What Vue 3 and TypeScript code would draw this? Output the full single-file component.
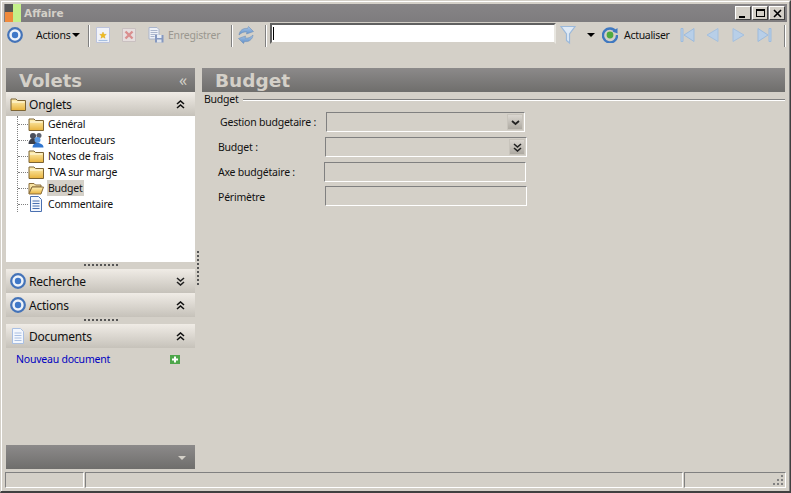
<script setup lang="ts">
const tree = [
  { label: 'Général', icon: 'i-folder', sel: false },
  { label: 'Interlocuteurs', icon: 'i-people', sel: false },
  { label: 'Notes de frais', icon: 'i-folder', sel: false },
  { label: 'TVA sur marge', icon: 'i-folder', sel: false },
  { label: 'Budget', icon: 'i-open', sel: true },
  { label: 'Commentaire', icon: 'i-doc', sel: false },
]
const rows = [
  { label: 'Gestion budgetaire :', cls: 'r1', arrow: 'i-down1' },
  { label: 'Budget :', cls: 'r2', arrow: 'i-down2' },
  { label: 'Axe budgétaire :', cls: 'r3', arrow: '' },
  { label: 'Périmètre', cls: 'r4', arrow: '' },
]
</script>

<template>
  <div class="root">
    <svg class="defs" width="0" height="0">
      <defs>
        <linearGradient id="fold" x1="0" y1="0" x2="0" y2="1">
          <stop offset="0" stop-color="#fff2b8" />
          <stop offset="1" stop-color="#e8b23c" />
        </linearGradient>
        <linearGradient id="blue" x1="0" y1="0" x2="0" y2="1">
          <stop offset="0" stop-color="#a9c6e8" />
          <stop offset="1" stop-color="#5f8fc8" />
        </linearGradient>
        <symbol id="i-target" viewBox="0 0 16 16">
          <circle cx="8" cy="8" r="6.800" fill="#eef3fa" stroke="#4473b8" stroke-width="2.200" />
          <circle cx="8" cy="8" r="3.200" fill="#3f78c8" />
        </symbol>
        <symbol id="i-folder" viewBox="0 0 16 16">
          <path d="M1 3h5l1.500 1.500H15.500V14.500H1z" fill="url(#fold)" stroke="#7d6434" />
          <path d="M2 6h12.500" stroke="#fffbe6" />
        </symbol>
        <symbol id="i-open" viewBox="0 0 16 16">
          <path d="M1 3.500h5L7.500 5H13v2H4L1 13.500z" fill="#f7e3a4" stroke="#8a6d3a" />
          <path d="M4 7h11.500L13 14H1z" fill="url(#fold)" stroke="#8a6d3a" />
        </symbol>
        <symbol id="i-people" viewBox="0 0 16 16">
          <circle cx="5" cy="4" r="3" fill="#4a4f5c" />
          <circle cx="11" cy="3.500" r="2.500" fill="#5c6270" />
          <path d="M.500 12c0-3.500 2-5.500 4.500-5.500S9.500 8.500 9.500 12z" fill="#3b3f4a" />
          <circle cx="9.500" cy="8" r="3" fill="#5b9ae4" />
          <path d="M4.500 15.500c0-3 2-4.500 5-4.500s6 1.500 6 4.500z" fill="#2f75cf" />
        </symbol>
        <symbol id="i-doc" viewBox="0 0 16 16">
          <path d="M2.500 .5h8l3 3v12h-11z" fill="#f3f7fd" stroke="#4a70b0" />
          <path d="M4.500 5h7M4.500 7.500h7M4.500 10h7M4.500 12.500h7" stroke="#4a70b0" />
        </symbol>
        <symbol id="i-doc-light" viewBox="0 0 16 16">
          <path d="M2.500 .5h8l3 3v12h-11z" fill="#f3f7fd" stroke="#a9bfe2" />
          <path d="M4.500 5h7M4.500 7.500h7M4.500 10h7M4.500 12.500h7" stroke="#a9bfe2" />
        </symbol>
        <symbol id="i-up2" viewBox="0 0 9 9">
          <path d="M1 4l3.500-3L8 4M1 8l3.500-3L8 8" fill="none" stroke="#111" stroke-width="1.600" />
        </symbol>
        <symbol id="i-down2" viewBox="0 0 9 9">
          <path d="M1 1l3.500 3L8 1M1 5l3.500 3L8 5" fill="none" stroke="#222" stroke-width="1.600" />
        </symbol>
        <symbol id="i-down1" viewBox="0 0 9 9">
          <path d="M1 3l3.500 3L8 3" fill="none" stroke="#222" stroke-width="1.800" />
        </symbol>
      </defs>
    </svg>

    <div class="win">
      <header class="title">
        <svg class="logo" width="16" height="18" viewBox="0 0 16 18">
          <rect x="0" y="0" width="8" height="8" fill="#555" />
          <rect x="0" y="8" width="8" height="10" fill="#f08a3c" />
          <rect x="8" y="0" width="8" height="18" fill="#c4f08a" />
        </svg>
        <span class="title-text">Affaire</span>
        <div class="winbtns">
          <span class="wb"><i class="min"></i></span>
          <span class="wb"><i class="max"></i></span>
          <span class="wb">
            <svg width="9" height="9" viewBox="0 0 9 9"><path d="M1 1l7 7M8 1l-7 7" stroke="#000" stroke-width="1.600" /></svg>
          </span>
        </div>
      </header>

      <div class="toolbar">
        <svg class="ic w16 m3"><use href="#i-target" /></svg>
        <span class="tb-text actions">Actions</span>
        <i class="caret c1"></i>
        <i class="sep s1"></i>
        <svg class="ic-new" width="14" height="16" viewBox="0 0 14 16">
          <path d="M.5 .5h13v15H.5z" fill="#f1f3f9" stroke="#bcc3dc" />
          <path d="M7 5l.9 2.300 2.400.1-1.900 1.500.7 2.400L7 10l-2.100 1.300.7-2.400L3.700 7.400l2.400-.1z" fill="#f0bd20" stroke="#d9a010" stroke-width=".4" />
          <path d="M2.500 13.500h9" stroke="#a5bfe2" stroke-width="1.200" />
        </svg>
        <svg class="ic-del" width="14" height="16" viewBox="0 0 14 16">
          <path d="M.5 1.500h13v13H.5z" fill="#e6dede" stroke="#c9c0c0" />
          <path d="M3.500 4.500l7 7M10.500 4.500l-7 7" stroke="#d98e8e" stroke-width="2.400" />
        </svg>
        <svg class="ic-save" width="16" height="16" viewBox="0 0 16 16">
          <path d="M1 .5h8l2 2V12H1z" fill="#eef1f7" stroke="#aab5cc" />
          <path d="M2.500 3.500h7M2.500 5.500h7M2.500 7.500h7M2.500 9.500h4" stroke="#aab5cc" />
          <rect x="7" y="8" width="8.500" height="7.500" fill="#8598c0" />
          <rect x="9" y="8" width="4.500" height="3" fill="#e8edf5" />
          <rect x="9" y="12.500" width="4.500" height="3" fill="#dfe4ec" />
        </svg>
        <span class="tb-text disabled">Enregistrer</span>
        <i class="sep s2"></i>
        <svg class="ic-ref" width="16" height="18" viewBox="0 0 16 18">
          <path d="M1 9C1.500 4.500 5 1.800 9.500 2.500L10.500 .5 15.500 5.500 8.500 8 9 6C6 5.500 3.500 6.500 1 9z" fill="url(#blue)" stroke="#6f90b8" stroke-width=".6" />
          <path d="M15 9C14.500 13.500 11 16.200 6.500 15.500L5.500 17.500 .5 12.500 7.500 10 7 12C10 12.500 12.500 11.500 15 9z" fill="url(#blue)" stroke="#6f90b8" stroke-width=".6" />
        </svg>
        <i class="sep s3"></i>
        <div class="search"><i class="cursor"></i></div>
        <svg class="ic-fun" width="16" height="20" viewBox="0 0 16 20">
          <path d="M1 1.500h14L9.500 9v9l-3-2.500V9z" fill="#dfeaf6" stroke="#9cb9da" stroke-width="1.200" />
        </svg>
        <i class="caret c2"></i>
        <svg class="ic-act" width="16" height="16" viewBox="0 0 16 16">
          <path d="M13.800 4.500A7 7 0 1 0 15 8" fill="none" stroke="#3f78c0" stroke-width="2.400" />
          <path d="M10.500 4.500L15.500 1v5.500z" fill="#3f78c0" />
          <circle cx="8" cy="8" r="3.400" fill="#4faa3e" />
        </svg>
        <span class="tb-text act-text">Actualiser</span>
        <svg class="nav n1" width="16" height="16" viewBox="0 0 16 16">
          <path d="M2 1.500h2v13H2zM15 1.500v13L5 8z" fill="#b8cfe8" stroke="#9dbbdc" />
        </svg>
        <svg class="nav n2" width="14" height="16" viewBox="0 0 14 16">
          <path d="M13 1.500v13L2 8z" fill="#b8cfe8" stroke="#a5c0de" />
        </svg>
        <svg class="nav n3" width="14" height="16" viewBox="0 0 14 16">
          <path d="M1 1.500v13L12 8z" fill="#b8cfe8" stroke="#a5c0de" />
        </svg>
        <svg class="nav n4" width="16" height="16" viewBox="0 0 16 16">
          <path d="M12 1.500h2v13h-2zM1 1.500v13L11 8z" fill="#b8cfe8" stroke="#9dbbdc" />
        </svg>
        <i class="sep s4"></i>
      </div>

      <main class="main">
        <aside class="left">
          <div class="dark">
            <span class="dark-title">Volets</span>
            <span class="collapse">«</span>
          </div>

          <div class="pane-h">
            <svg class="ic w16 ph-ic"><use href="#i-folder" /></svg>
            <span class="ph-text">Onglets</span>
            <svg class="chev"><use href="#i-up2" /></svg>
          </div>
          <div class="tree">
            <i class="vline"></i>
            <div v-for="t in tree" :key="t.label" class="node">
              <i class="hline"></i>
              <svg class="ic w16"><use :href="'#' + t.icon" /></svg>
              <span class="node-text" :class="{ sel: t.sel }">{{ t.label }}</span>
            </div>
          </div>
          <div class="dots"></div>

          <div class="pane-h">
            <svg class="ic w16 ph-ic"><use href="#i-target" /></svg>
            <span class="ph-text">Recherche</span>
            <svg class="chev"><use href="#i-down2" /></svg>
          </div>
          <div class="pane-h">
            <svg class="ic w16 ph-ic"><use href="#i-target" /></svg>
            <span class="ph-text">Actions</span>
            <svg class="chev"><use href="#i-up2" /></svg>
          </div>
          <div class="dots"></div>

          <div class="pane-h">
            <svg class="ic w16 ph-ic"><use href="#i-doc-light" /></svg>
            <span class="ph-text">Documents</span>
            <svg class="chev"><use href="#i-up2" /></svg>
          </div>
          <div class="doc-row">
            <a class="doc-link">Nouveau document</a>
            <svg class="plus" width="10" height="9" viewBox="0 0 10 9">
              <rect width="10" height="9" fill="#4da64a" />
              <path d="M5 1.500v6M2 4.500h6" stroke="#fff" stroke-width="2" />
            </svg>
          </div>

          <div class="grow"></div>
          <div class="dark foot"><i class="foot-caret"></i></div>
        </aside>

        <div class="grip"><i></i></div>

        <section class="right">
          <div class="dark">
            <span class="dark-title budget">Budget</span>
          </div>
          <div class="legend">
            <span>Budget</span>
            <i></i>
          </div>
          <div class="form">
            <div v-for="r in rows" :key="r.label" class="row" :class="r.cls">
              <label>{{ r.label }}</label>
              <div class="field">
                <span v-if="r.arrow" class="drop"><svg class="arrow"><use :href="'#' + r.arrow" /></svg></span>
              </div>
            </div>
          </div>
        </section>
      </main>

      <footer class="status">
        <div class="cell a"></div>
        <div class="cell b"></div>
        <div class="cell c">
          <svg class="resize" width="12" height="12" viewBox="0 0 12 12">
            <path d="M9 1h2v2H9zM9 5h2v2H9zM5 5h2v2H5zM9 9h2v2H9zM5 9h2v2H5zM1 9h2v2H1z" fill="#808080" />
          </svg>
        </div>
      </footer>
    </div>
  </div>
</template>

<style scoped>
.root {
  width: 791px;
  height: 493px;
  box-sizing: border-box;
  background: #d4d0c8;
  border-right: 1px solid #404040;
  border-bottom: 2px solid #404040;
  border-top: 1px solid #d4d0c8;
  border-left: 1px solid #d4d0c8;
  font-family: "Noto Sans", "Liberation Sans", sans-serif;
  font-size: 11px;
  letter-spacing: -0.22px;
  color: #111;
  overflow: hidden;
}
.defs { position: absolute; }
.win {
  height: 100%;
  box-sizing: border-box;
  border-top: 1px solid #fff;
  border-left: 1px solid #fff;
  border-right: 1px solid #808080;
  padding: 2px 2px 3px;
  display: flex;
  flex-direction: column;
}
.title {
  height: 18px;
  flex: none;
  display: flex;
  align-items: center;
  background: linear-gradient(#868486, #7e7c7e);
}
.logo { flex: none; margin-left: 1px; }
.title-text {
  margin-left: 3px;
  font-family: "DejaVu Sans", sans-serif;
  font-weight: 700;
  font-size: 10.500px;
  letter-spacing: 0;
  color: #d4d0c8;
}
.winbtns { margin-left: auto; margin-right: 2px; display: flex; gap: 0; }
.wb {
  width: 16px;
  height: 14px;
  margin-left: 1px;
  box-sizing: border-box;
  background: #d4d0c8;
  border: 1px solid;
  border-color: #fff #404040 #404040 #fff;
  display: flex;
  align-items: center;
  justify-content: center;
  position: relative;
}
.min { position: absolute; left: 3px; bottom: 1px; width: 6px; height: 2px; background: #000; }
.max { width: 9px; height: 8px; box-sizing: border-box; border: 1px solid #000; border-top-width: 2px; }

.toolbar {
  height: 25px;
  flex: none;
  display: flex;
  align-items: center;
}
.ic { display: block; flex: none; }
.w16 { width: 16px; height: 16px; }
.m3 { margin-left: 3px; }
.tb-text { font-size: 10.500px; white-space: nowrap; flex: none; }
.actions { margin-left: 13px; width: 36px; }
.caret {
  flex: none;
  width: 0;
  height: 0;
  border-left: 4px solid transparent;
  border-right: 4px solid transparent;
  border-top: 4px solid #000;
}
.c1 { margin-left: 0; }
.sep {
  flex: none;
  width: 1px;
  height: 22px;
  margin-top: 3px;
  background: #808080;
  box-shadow: 1px 0 0 #fff;
}
.s1 { margin-left: 8px; }
.ic-new { flex: none; margin-left: 7px; }
.ic-del { flex: none; margin-left: 12px; }
.ic-save { flex: none; margin-left: 12px; }
.disabled { color: #9a978f; margin-left: 4px; width: 53px; }
.s2 { margin-left: 10px; }
.ic-ref { flex: none; margin-left: 6px; }
.s3 { margin-left: 11px; }
.search {
  flex: none;
  margin-left: 4px;
  margin-top: -2px;
  width: 286px;
  height: 21px;
  box-sizing: border-box;
  background: #fff;
  border: 2px solid;
  border-color: #606060 #e8e6e0 #d4d0c8 #606060;
  padding: 2px 0 0 1px;
}
.cursor { display: block; width: 1px; height: 13px; background: #000; }
.ic-fun { flex: none; margin-left: 4px; }
.c2 { margin-left: 11px; }
.ic-act { flex: none; margin-left: 7px; }
.act-text { margin-left: 6px; width: 46px; letter-spacing: -0.3px; }
.nav { flex: none; }
.n1 { margin-left: 9px; }
.n2 { margin-left: 10px; }
.n3 { margin-left: 13px; }
.n4 { margin-left: 11px; }
.s4 { margin-left: 11px; }

.main {
  flex: 1;
  min-height: 0;
  display: flex;
  padding: 21px 0 0 2px;
}
.left { width: 189px; flex: none; display: flex; flex-direction: column; }
.dark {
  height: 24px;
  flex: none;
  display: flex;
  align-items: center;
  background: linear-gradient(#8c8a8a, #6f6e6c);
}
.dark-title {
  font-family: "DejaVu Sans", sans-serif;
  font-weight: 700;
  font-size: 18px;
  letter-spacing: 0;
  color: #d4d0c8;
  margin-left: 13px;
}
.budget { margin-left: 13px; font-size: 18.500px; }
.collapse {
  margin-left: auto;
  margin-right: 8px;
  color: #d4d0c8;
  font-size: 16px;
  line-height: 20px;
}
.pane-h {
  height: 24px;
  flex: none;
  display: flex;
  align-items: center;
  background: linear-gradient(#f0ece6, #c6c2ba);
}
.ph-ic { margin-left: 4px; }
.ph-text { margin-left: 3px; font-size: 12px; }
.chev { width: 9px; height: 9px; margin-left: auto; margin-right: 10px; flex: none; }
.tree {
  position: relative;
  height: 146px;
  flex: none;
  background: #fff;
  padding-top: 0;
  box-sizing: border-box;
}
.vline {
  position: absolute;
  left: 11px;
  top: 0;
  height: 96px;
  border-left: 1px dotted #808080;
}
.node { height: 16px; display: flex; align-items: center; padding-left: 22px; position: relative; }
.hline {
  position: absolute;
  left: 12px;
  top: 8px;
  width: 10px;
  border-top: 1px dotted #808080;
}
.node-text { margin-left: 3px; padding: 0 1px; line-height: 16px; font-size: 10.500px; white-space: nowrap; }
.sel { background: #d4d0c8; }
.dots {
  height: 7px;
  flex: none;
  position: relative;
}
.dots::after {
  content: "";
  position: absolute;
  left: 78px;
  top: 2px;
  width: 34px;
  height: 2px;
  background: repeating-linear-gradient(90deg, #555 0 2px, transparent 2px 4px);
}
.doc-row { display: flex; align-items: center; height: 22px; flex: none; padding-left: 10px; }
.doc-link { color: #0000c0; font-size: 10.500px; white-space: nowrap; }
.plus { margin-left: auto; margin-right: 15px; flex: none; }
.grow { flex: 1; }
.foot { justify-content: flex-end; }
.foot-caret {
  width: 0;
  height: 0;
  margin-right: 9px;
  margin-top: 2px;
  border-left: 4px solid transparent;
  border-right: 4px solid transparent;
  border-top: 4px solid #d4d0c8;
}
.grip { width: 7px; flex: none; position: relative; }
.grip i {
  position: absolute;
  left: 2px;
  top: 183px;
  height: 34px;
  border-left: 2px dotted #555;
}
.right { flex: 1; min-width: 0; margin-right: 2px; }
.legend {
  display: flex;
  align-items: center;
  height: 14px;
  padding-left: 2px;
  font-size: 10.500px;
}
.legend i {
  flex: 1;
  height: 1px;
  margin-left: 4px;
  background: #808080;
  box-shadow: 0 1px 0 #fff;
}
.form { padding-top: 6px; }
.row { display: flex; align-items: center; height: 20px; }
.row label { flex: none; font-size: 10.500px; white-space: nowrap; }
.field {
  flex: none;
  width: 202px;
  height: 20px;
  box-sizing: border-box;
  border: 1px solid;
  border-color: #808080 #fff #fff #808080;
  display: flex;
  justify-content: flex-end;
  align-items: center;
  padding-right: 1px;
}
.drop {
  width: 16px;
  height: 16px;
  display: flex;
  align-items: center;
  justify-content: center;
  background: linear-gradient(#dedad4, #aaa69e);
  box-shadow: inset 0 0 0 1px #c8c4bc;
}
.arrow { width: 9px; height: 9px; }
.r1 { padding-left: 18px; }
.r1 label { width: 106px; }
.r1 .field { width: 199px; }
.r2 { padding-left: 16px; margin-top: 5px; }
.r2 label { width: 107px; }
.r3 { padding-left: 16px; margin-top: 5px; }
.r3 label { width: 106px; }
.r4 { padding-left: 16px; margin-top: 4px; }
.r4 label { width: 107px; padding-top: 1px; }

.status {
  height: 16px;
  flex: none;
  margin-top: 3px;
  display: flex;
  padding-left: 1px;
  gap: 1px;
}
.cell {
  height: 16px;
  box-sizing: border-box;
  border: 1px solid;
  border-color: #808080 #fff #fff #808080;
  position: relative;
}
.a { width: 79px; flex: none; }
.b { width: 598px; flex: none; }
.c { flex: 1; margin-right: 1px; }
.resize { position: absolute; right: 1px; bottom: 1px; }
</style>
